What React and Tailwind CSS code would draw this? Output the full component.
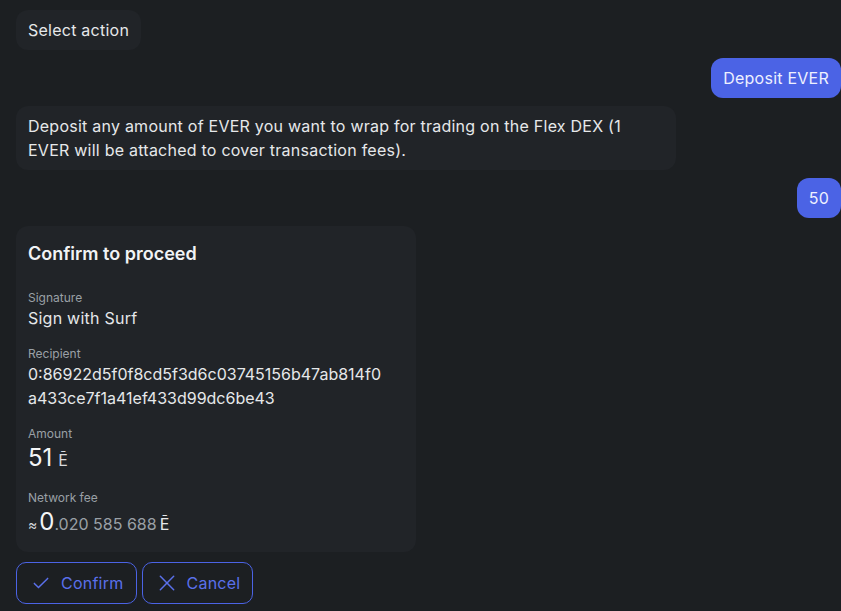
import React from "react";

const Bubble = ({ children, mine }) => (
  <div className={mine ? "flex justify-end" : "flex"}>
    <div
      className={
        mine
          ? "rounded-xl bg-[#4b63e5] px-3 py-2 text-[#eef0ff]"
          : "max-w-[660px] rounded-xl bg-[#212428] px-3 py-2 text-[#e6e8ea]"
      }
    >
      {children}
    </div>
  </div>
);

const Field = ({ label, children }) => (
  <div className="mt-4">
    <div className="text-xs leading-4 tracking-normal text-[#9aa0a6]">{label}</div>
    {children}
  </div>
);

const App = () => {
  return (
    <div
      className="min-h-[611px] bg-[#1c1f22] pl-4 pt-[10px] text-base leading-6 tracking-[0.015em]"
      style={{ fontFamily: "Inter, 'Noto Sans', sans-serif" }}
    >
      <div className="flex flex-col gap-2">
        <Bubble>Select action</Bubble>
        <Bubble mine>Deposit EVER</Bubble>
        <Bubble>
          Deposit any amount of EVER you want to wrap for trading on the Flex DEX (1
          EVER will be attached to cover transaction fees).
        </Bubble>
        <Bubble mine>50</Bubble>

        <div className="w-[400px] rounded-xl bg-[#212428] px-3 pb-[14px] pt-[14px] text-[#e6e8ea]">
          <div className="text-lg font-semibold leading-7 tracking-normal text-[#f1f3f5]">Confirm to proceed</div>
          <div className="h-[6px]" />
          <Field label="Signature">
            <div>Sign with Surf</div>
          </Field>
          <Field label="Recipient">
            <div className="tracking-normal">
              <div>0:86922d5f0f8cd5f3d6c03745156b47ab814f0</div>
              <div>a433ce7f1a41ef433d99dc6be43</div>
            </div>
          </Field>
          <Field label="Amount">
            <div className="flex h-8 items-baseline leading-8">
              <span className="text-2xl tracking-normal text-[#f4f5f6]">51</span>
              <span className="ml-[6px] text-base text-[#d8dade]">Ē</span>
            </div>
          </Field>
          <Field label="Network fee">
            <div className="flex h-8 items-baseline leading-8 tracking-normal">
              <span className="mr-[2px] text-sm text-[#d8dade]">≈</span>
              <span className="text-2xl text-[#f4f5f6]">0</span>
              <span className="text-base text-[#9aa0a6]">.020 585 688</span>
              <span className="ml-[3px] text-base text-[#e6e8ea]">Ē</span>
            </div>
          </Field>
        </div>

        <div className="mt-[2px] flex gap-[5px]">
          <button className="flex h-[42px] items-center gap-[10px] rounded-[10px] border border-[#4b63e5] pl-[14px] pr-[12px] text-[#5a70ea]">
            <svg width="20" height="20" viewBox="0 0 24 24" fill="none" stroke="currentColor" strokeWidth="1.8" strokeLinecap="round" strokeLinejoin="round">
              <path d="M4 12.5l5 5L20 6.5" />
            </svg>
            Confirm
          </button>
          <button className="flex h-[42px] items-center gap-[10px] rounded-[10px] border border-[#4b63e5] pl-[14px] pr-[12px] text-[#5a70ea]">
            <svg width="20" height="20" viewBox="0 0 24 24" fill="none" stroke="currentColor" strokeWidth="1.8" strokeLinecap="round">
              <path d="M4 4l16 16M20 4L4 20" />
            </svg>
            Cancel
          </button>
        </div>
      </div>
    </div>
  );
};

export default App;
